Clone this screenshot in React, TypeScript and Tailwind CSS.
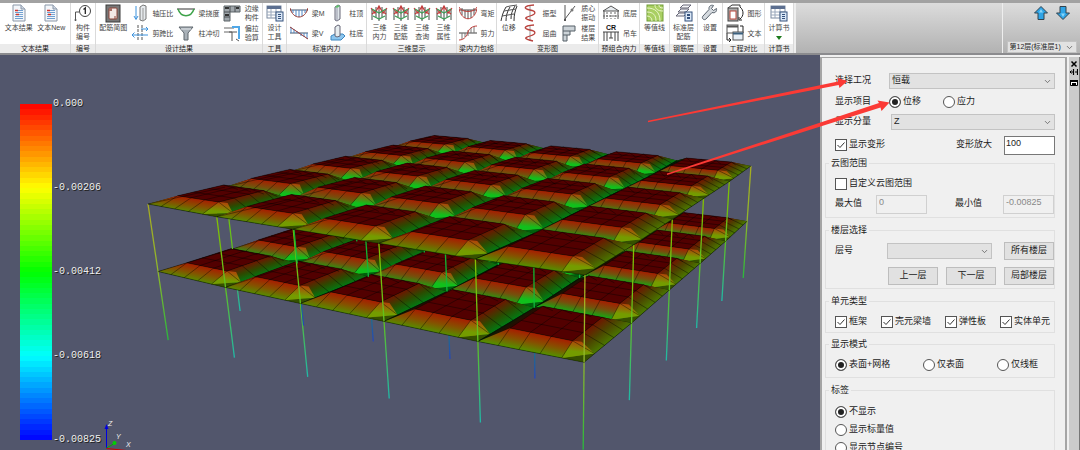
import React from 'react';
import { ChevronDown } from 'lucide-react';

type Point = [number, number];

const Svg: React.FC<{ w?: number; h?: number; children: React.ReactNode }> = ({ w = 18, h = 18, children }) => (
    <svg width={w} height={h} viewBox={`0 0 ${w} ${h}`} fill="none" aria-hidden="true">
        {children}
    </svg>
);

const DocIcon = () => (
    <Svg w={14} h={18}>
        <path d="M1 1h8l4 4v12H1z" fill="#f3f6fa" stroke="#8a97a8" />
        <path d="M9 1v4h4" fill="#cfd8e4" stroke="#8a97a8" />
        <path d="M6 6.500h5M3 8.500h8M3 12.500h8M3 14.500h8" stroke="#6f9fd0" />
        <path d="M3 6.500h3M3 10.500h8" stroke="#7fa9d6" />
        <path d="M3 6.500h3M4 10.500h3" stroke="#d0342c" strokeWidth="1.500" />
    </Svg>
);

const NumberIcon = () => (
    <Svg>
        <circle cx="11" cy="7" r="5.500" stroke="#444" />
        <path d="M9.500 5.500 11.300 4v6" stroke="#222" strokeWidth="1.300" />
        <path d="M1.500 17V8H5" stroke="#555" />
        <circle cx="1.500" cy="16" r="1" fill="#555" />
    </Svg>
);

const RebarIcon = () => (
    <Svg w={16} h={19}>
        <rect x="1" y="1" width="14" height="17" fill="#777" stroke="#3a3a3a" />
        <rect x="4" y="4" width="8" height="11" rx="1" fill="#f4e9e6" stroke="#8d4438" />
        <path d="M6 4v3M4 6h3M10 15v-3" stroke="#8d4438" />
    </Svg>
);

const AxialIcon = () => (
    <Svg>
        <path d="M9 3l3-2 3 1v13l-3 2-3-1z" fill="#e6eaed" stroke="#777" />
        <path d="M12 4v13" stroke="#999" />
        <path d="M5 2v13M3 12l2 3.500L7 12" stroke="#3b92dd" />
    </Svg>
);

const ShearSpanIcon = () => (
    <Svg>
        <path d="M7 1v16M11 1v16" stroke="#555" strokeDasharray="3 1" />
        <path d="M1 11h16M3.500 8.500 1 11l2.500 2.500M10 5h7M15 3l2 2-2 2" stroke="#3b92dd" />
    </Svg>
);

const DeflectionIcon = () => (
    <Svg>
        <path d="M0 5h18" stroke="#333" />
        <path d="M1 5c3 9 13 9 16 0" stroke="#3ea34a" strokeWidth="1.500" />
    </Svg>
);

const PunchIcon = () => (
    <Svg>
        <path d="M2 3h14l-5 6v7H7V9z" fill="#a9b1b8" stroke="#5e666d" />
        <path d="M4 5h10" stroke="#e2e6ea" />
    </Svg>
);

const EdgeIcon = () => (
    <Svg>
        <path d="M1 2h16v6H7v9H1z" fill="#9fa6ab" stroke="#5b6267" />
        <path d="M7 2v6M12 2v6M1 8h6M1 13h6" stroke="#4a4f53" />
        <path d="M2 4h4M2 11h4M13 4h3" stroke="#333" strokeWidth="2" />
    </Svg>
);

const TensionIcon = () => (
    <Svg>
        <path d="M1 4h10M1 8h8" stroke="#666" />
        <path d="M9 3h7v12" stroke="#50a8e8" strokeWidth="2" />
        <path d="M9 8v9M6 8h8M13 15l3 2" stroke="#555" />
    </Svg>
);

const SheetIcon = () => (
    <Svg>
        <rect x="1" y="2" width="14" height="12" fill="#fff" stroke="#7b8aa0" />
        <path d="M1 3.500h14" stroke="#5c6f90" strokeWidth="3" />
        <path d="M1 8h14M1 11h14M5 5v9M10 5v9" stroke="#9aa8bb" />
        <rect x="10" y="8" width="7" height="9" fill="#dbe8f7" stroke="#35527d" />
        <path d="M12 10.500h3M12 12.500h3M12 14.500h3" stroke="#35527d" />
    </Svg>
);

const MomentIcon = () => (
    <Svg>
        <path d="M0 6h18" stroke="#44546a" />
        <path d="M3 6v3M6 6v6M9 6v7M12 6v6M15 6v3" stroke="#4b86c6" />
        <path d="M0 4c3 12 15 12 18 0" stroke="#963b36" />
    </Svg>
);

const ShearIcon = () => (
    <Svg>
        <path d="M0 9h18" stroke="#44546a" />
        <path d="M1 3v6M4 5v4M7 7v2M11 9v3M14 9v4M17 9v6" stroke="#4b86c6" />
        <path d="M0 3l18 12" stroke="#963b36" />
    </Svg>
);

const ColumnIcon = () => (
    <Svg>
        <path d="M7 3l3-2 2 1v13l-3 2-2-1z" fill="#dfe6ea" stroke="#667" />
        <path d="M7 3l2 1 3-2-2-1z" fill="#5fc06b" />
        <path d="M9 4v13" stroke="#99a" />
    </Svg>
);

const ColumnBaseIcon = () => (
    <Svg>
        <path d="M3 12l4-2h8l2 2-4 4H3z" fill="#8cc6ef" stroke="#3d86bf" />
        <path d="M7 3l3-2 2 1v10l-3 1-2-1z" fill="#e6ecef" stroke="#667" />
    </Svg>
);

const Frame3dIcon = () => (
    <Svg>
        <path d="M2 16V5M16 16V5M6 13V3M12 13V3M9 17V6" stroke="#3e4a44" />
        <path d="M1 4l4 5 4-7 4 7 4-5M2 10l4-3M16 10l-4-3M9 2v4" stroke="#c03a3a" strokeWidth="1.200" />
        <path d="M2 5l7 4 7-4M3 12l6 3 6-3" stroke="#3c9c56" strokeWidth="1.200" />
    </Svg>
);

const EnvelopeMomentIcon = () => (
    <Svg>
        <path d="M0 6h18" stroke="#444" />
        <path d="M3 4v7M6 6v8M9 6v9M12 6v8M15 4v7" stroke="#555" />
        <path d="M0 3c2 6 16 6 18 0M0 5c3 13 15 13 18 0" stroke="#c0413d" />
    </Svg>
);

const EnvelopeShearIcon = () => (
    <Svg>
        <path d="M0 9h18" stroke="#444" />
        <path d="M3 9v6M6 9v4M9 6v6M12 4v5M15 2v7" stroke="#777" />
        <path d="M0 16c6 0 8-5 9-8s4-6 9-6" stroke="#c0413d" />
    </Svg>
);

const ShiftIcon = () => (
    <Svg>
        <path d="M1 17C2 12 3 8 6 3M6 17c0-5 1-9 4-14M11 15c0-5 1-8 4-13M14 17c0-6 1-10 3-15" stroke="#333" />
        <path d="M6 3l4-1 7-1M4 7l12-2M2 12l12-2" stroke="#555" />
    </Svg>
);

const ModeIcon = () => (
    <Svg>
        <path d="M9 1v16" stroke="#999" />
        <path d="M13 1C1 2 3 5 9 6s7 4 0 6-5 3 3 5" stroke="#b8423d" strokeWidth="1.300" />
    </Svg>
);

const CentroidIcon = () => (
    <Svg>
        <path d="M5 1v16M5 15L15 2" stroke="#555" />
        <circle cx="5" cy="16" r="1" fill="#333" />
        <circle cx="12" cy="6" r="1.500" fill="#777" />
    </Svg>
);

const StoreyIcon = () => (
    <Svg>
        <path d="M3 2h12v5h-5v4H7v6H3z" fill="#ccd3d8" stroke="#555e66" />
        <path d="M3 7h7M3 11h4" stroke="#555e66" />
    </Svg>
);

const GroundIcon = () => (
    <Svg>
        <path d="M1 7l8-5 8 5zM2 7v8M16 7v8" fill="#e7ebee" stroke="#555" />
        <path d="M1 12h16M5 8v7M9 8v7M13 8v7" stroke="#666" strokeDasharray="2 1" />
    </Svg>
);

const CraneIcon = () => (
    <Svg>
        <path d="M2 8v9M5 8v9M13 8v9M16 8v9M1 8h16M9 8v6M7 14h4" stroke="#444" />
        <text x="4" y="6" fontSize="7" fontWeight="bold" fontFamily="Liberation Sans, sans-serif" fill="#111">
            CR
        </text>
    </Svg>
);

const ContourIcon = () => (
    <Svg>
        <rect x="1" y="1" width="16" height="16" fill="#a9cf62" stroke="#719c37" />
        <path d="M1 12c3 0 5 2 5 5M1 8c6 0 9 3 9 9M1 4c8 0 13 4 13 13M9 1c0 4 3 6 8 6M13 1c0 2 1 3 4 3" stroke="#eaf6ca" />
    </Svg>
);

const LayersIcon = () => (
    <Svg>
        <path d="M5 4l3-3h8l-3 3zM3 8l3-3h8l-3 3zM1 12l3-3h8l-3 3z" fill="#f3f5f7" stroke="#667" />
        <rect x="10" y="8" width="7" height="9" fill="#dbe8f7" stroke="#35527d" />
        <path d="M12 11h3M12 14h3" stroke="#35527d" strokeWidth="2" />
    </Svg>
);

const WrenchIcon = () => (
    <Svg>
        <path
            d="M15.500 4.500l-3 2-2-2 2-3c-3-1-5 1-4.500 4L2 12c-2 2 1 5 3 3l6-6.500c3 1 5-1 4.500-4z"
            fill="#d5dadf"
            stroke="#59636d"
        />
    </Svg>
);

const CompareShapeIcon = () => (
    <Svg>
        <path d="M2 4l4-3h8v2" stroke="#333" />
        <rect x="2" y="4" width="10" height="13" fill="#aaa" stroke="#444" />
        <rect x="4" y="7" width="6" height="8" fill="#fff" stroke="#b9473b" />
        <path d="M14 3c4 3 4 9 0 12M13 13v3h3" stroke="#222" />
    </Svg>
);

const CompareTextIcon = () => (
    <Svg>
        <path d="M1 9v7h4M3 14l2 2-2 2M17 9V2h-3" stroke="#222" />
        <rect x="1" y="1" width="11" height="8" fill="#fff" stroke="#555" />
        <path d="M1 2.500h11" stroke="#555" strokeWidth="2" />
        <rect x="7" y="8" width="10" height="8" fill="#e9f1f8" stroke="#555" />
        <path d="M7 9.500h10" stroke="#3c617f" strokeWidth="2" />
    </Svg>
);

type Tool = { icon: React.FC; lines: string[] };
type Column = { big?: boolean; more?: boolean; tools: Tool[] };

const big = (icon: React.FC, ...lines: string[]): Column => ({ big: true, tools: [{ icon, lines }] });
const pair = (a: Tool, b: Tool): Column => ({ tools: [a, b] });

const ribbon: { title: string; width: string; columns: Column[] }[] = [
    { title: '文本结果', width: 'w-[71px]', columns: [big(DocIcon, '文本结果'), big(DocIcon, '文本New')] },
    { title: '编号', width: 'w-[25px]', columns: [big(NumberIcon, '构件', '编号')] },
    {
        title: '设计结果',
        width: 'w-[167px]',
        columns: [
            big(RebarIcon, '配筋简图'),
            pair({ icon: AxialIcon, lines: ['轴压比'] }, { icon: ShearSpanIcon, lines: ['剪跨比'] }),
            pair({ icon: DeflectionIcon, lines: ['梁挠度'] }, { icon: PunchIcon, lines: ['柱冲切'] }),
            pair({ icon: EdgeIcon, lines: ['边缘', '构件'] }, { icon: TensionIcon, lines: ['偏拉', '验算'] }),
        ],
    },
    { title: '工具', width: 'w-[24px]', columns: [big(SheetIcon, '设计', '工具')] },
    {
        title: '标准内力',
        width: 'w-[80px]',
        columns: [
            pair({ icon: MomentIcon, lines: ['梁M'] }, { icon: ShearIcon, lines: ['梁V'] }),
            pair({ icon: ColumnIcon, lines: ['柱顶'] }, { icon: ColumnBaseIcon, lines: ['柱底'] }),
        ],
    },
    {
        title: '三维显示',
        width: 'w-[90px]',
        columns: [
            big(Frame3dIcon, '三维', '内力'),
            big(Frame3dIcon, '三维', '配筋'),
            big(Frame3dIcon, '三维', '查询'),
            big(Frame3dIcon, '三维', '属性'),
        ],
    },
    {
        title: '梁内力包络',
        width: 'w-[40px]',
        columns: [pair({ icon: EnvelopeMomentIcon, lines: ['弯矩'] }, { icon: EnvelopeShearIcon, lines: ['剪力'] })],
    },
    {
        title: '变形图',
        width: 'w-[102px]',
        columns: [
            big(ShiftIcon, '位移'),
            pair({ icon: ModeIcon, lines: ['振型'] }, { icon: ModeIcon, lines: ['屈曲'] }),
            pair({ icon: CentroidIcon, lines: ['质心', '振动'] }, { icon: StoreyIcon, lines: ['楼层', '结果'] }),
        ],
    },
    {
        title: '预组合内力',
        width: 'w-[41px]',
        columns: [pair({ icon: GroundIcon, lines: ['底层'] }, { icon: CraneIcon, lines: ['吊车'] })],
    },
    { title: '等值线', width: 'w-[30px]', columns: [big(ContourIcon, '等值线')] },
    { title: '钢筋层', width: 'w-[28px]', columns: [big(LayersIcon, '标准层', '配筋')] },
    { title: '设置', width: 'w-[25px]', columns: [big(WrenchIcon, '设置')] },
    {
        title: '工程对比',
        width: 'w-[42px]',
        columns: [pair({ icon: CompareShapeIcon, lines: ['图形'] }, { icon: CompareTextIcon, lines: ['文本'] })],
    },
    { title: '计算书', width: 'w-[29px]', columns: [{ ...big(SheetIcon, '计算书'), more: true }] },
];

const ToolButton: React.FC<{ tool: Tool; isBig?: boolean; more?: boolean }> = ({ tool, isBig, more }) => {
    const Icon = tool.icon;
    return (
        <button
            className={
                isBig
                    ? 'flex h-10 flex-col items-center whitespace-nowrap leading-[9px]'
                    : 'flex h-5 items-center gap-[3px] whitespace-nowrap text-left leading-[9px]'
            }
        >
            <span className={isBig ? 'flex h-5 items-center' : 'flex w-[19px] justify-center'}>
                <Icon />
            </span>
            <span>
                {tool.lines.map((line) => (
                    <span key={line} className="block">
                        {line}
                    </span>
                ))}
            </span>
            {more && (
                <svg width="6" height="4" viewBox="0 0 6 4" className="mt-1">
                    <path d="M0 0h6L3 4z" fill="#1c7a1c" />
                </svg>
            )}
        </button>
    );
};

const Ribbon = () => (
    <header className="flex h-[55px] shrink-0 border-t-[3px] border-b-2 border-t-[#a2a2a2] border-b-[#8b8b8e] bg-linear-to-b from-[#dcdcdc] to-[#b2b2b2] text-[7px] text-[#444]">
        <nav className="flex shrink-0 border-r-2 border-[#eee] bg-white">
            {ribbon.map((group) => (
                <section key={group.title} className={`flex shrink-0 flex-col border-r border-[#dadada] ${group.width}`}>
                    <div className="flex h-[41px] items-start justify-evenly">
                        {group.columns.map((column, index) => (
                            <div key={index}>
                                {column.tools.map((tool) => (
                                    <ToolButton
                                        key={tool.lines.join('')}
                                        tool={tool}
                                        isBig={column.big}
                                        more={column.more}
                                    />
                                ))}
                            </div>
                        ))}
                    </div>
                    <h2 className="flex flex-1 items-center justify-center whitespace-nowrap bg-[#ebebeb] leading-[9px] text-[#222]">
                        {group.title}
                    </h2>
                </section>
            ))}
        </nav>
        <div className="ml-auto flex w-[78px] flex-col items-center justify-between border-l border-[#eee] pt-[3px]">
            <div className="flex gap-2 pl-5">
                {['', 'rotate-180'].map((turn) => (
                    <button key={turn} aria-label={turn ? '下一层' : '上一层'}>
                        <svg width="14" height="14" viewBox="0 0 14 14" className={turn}>
                            <path d="M7 .500 13.500 7H10v6.500H4V7H.500z" fill="#2fa4e6" stroke="#33424d" />
                            <path d="M5 6.500h4L7 3z" fill="#8bd5f7" />
                        </svg>
                    </button>
                ))}
            </div>
            <div className="w-[70px]">
                <Select value="第12层(标准层1)" label="楼层" size="h-3 pl-0.5" />
            </div>
        </div>
    </header>
);

const Select: React.FC<{ value: string; label: string; size: string }> = ({ value, label, size }) => (
    <div className="grid items-center">
        <select
            aria-label={label}
            defaultValue={value}
            className={`w-full appearance-none border border-[#c3c3c3] bg-[#e2e2e2] text-[#222] [grid-area:1/1] ${size}`}
        >
            <option>{value}</option>
        </select>
        <ChevronDown
            className="pointer-events-none mr-[3px] justify-self-end text-[#555] [grid-area:1/1]"
            size={9}
            strokeWidth={2}
        />
    </div>
);

const Check: React.FC<{ label: string; checked?: boolean }> = ({ label, checked }) => (
    <label className="flex items-center gap-0.5 whitespace-nowrap">
        <span className="grid">
            <input
                type="checkbox"
                defaultChecked={checked}
                className="peer size-3 appearance-none border border-[#555] bg-white [grid-area:1/1]"
            />
            <svg
                viewBox="0 0 12 12"
                className="pointer-events-none hidden size-3 [grid-area:1/1] peer-checked:block"
                fill="none"
            >
                <path d="M2.500 6 5 8.500 9.500 3.500" stroke="#333" />
            </svg>
        </span>
        {label}
    </label>
);

const Radio: React.FC<{ label: string; name: string; checked?: boolean }> = ({ label, name, checked }) => (
    <label className="flex items-center gap-0.5 whitespace-nowrap">
        <input
            type="radio"
            name={name}
            defaultChecked={checked}
            className="size-3 appearance-none rounded-full border border-[#555] bg-white checked:bg-[#222] checked:shadow-[inset_0_0_0_2px_white]"
        />
        {label}
    </label>
);

const Group: React.FC<{ title: string; className: string; children: React.ReactNode }> = ({
    title,
    className,
    children,
}) => (
    <fieldset className={`min-w-0 border border-[#e0e0e0] pl-[9px] ${className}`}>
        <legend className="-ml-1.5 px-0.5 leading-[10px]">{title}</legend>
        {children}
    </fieldset>
);

const PanelButton: React.FC<{ children: React.ReactNode }> = ({ children }) => (
    <button className="h-[18px] w-[50px] border border-[#bdbdbd] bg-[#e1e1e1]">{children}</button>
);

const SidePanel = () => (
    <aside className="flex w-[260px] shrink-0 bg-[#f0f0f0] pt-0.5 text-[9px] text-[#222]">
        <form className="flex-1 border-t border-r-2 border-l-2 border-[#a5a5a5] pt-[13px] pr-[10px] pl-[3px]">
            <div className="flex h-5 items-center pl-[10px]">
                <span className="w-[54px]">选择工况</span>
                <div className="flex-1">
                    <Select label="选择工况" value="恒载" size="h-4 pl-0.5" />
                </div>
            </div>
            <div className="flex h-[21px] items-center pl-[10px]">
                <span className="w-[54px]">显示项目</span>
                <div className="flex gap-[22px]">
                    <Radio name="item" label="位移" checked />
                    <Radio name="item" label="应力" />
                </div>
            </div>
            <div className="flex h-5 items-center pl-[10px]">
                <span className="w-14">显示分量</span>
                <div className="flex-1">
                    <Select label="显示分量" value="Z" size="h-4 pl-0.5" />
                </div>
            </div>
            <div className="flex h-[26px] items-center pl-[10px]">
                <Check label="显示变形" checked />
                <label className="ml-auto flex items-center gap-3">
                    变形放大
                    <input
                        defaultValue="100"
                        className="h-[19px] w-[51px] border border-[#777] bg-white px-px pb-1 text-[9px]"
                    />
                </label>
            </div>
            <Group title="云图范围" className="pt-1.5 pb-[3px]">
                <div className="flex h-5 items-center">
                    <Check label="自定义云图范围" />
                </div>
                <div className="flex h-5 items-center justify-between">
                    <label className="flex items-center gap-[14px]">
                        最大值
                        <input
                            disabled
                            defaultValue="0"
                            className="h-[19px] w-[51px] border border-[#d0d0d0] px-0.5 pb-1 text-[#888]"
                        />
                    </label>
                    <label className="flex items-center gap-[21px]">
                        最小值
                        <input
                            disabled
                            defaultValue="-0.00825"
                            className="h-[19px] w-[51px] border border-[#d0d0d0] px-0.5 pb-1 text-[#888]"
                        />
                    </label>
                </div>
            </Group>
            <Group title="楼层选择" className="mt-[7px] pt-1.5 pb-[3px]">
                <div className="flex h-5 items-center justify-between">
                    <span className="w-[52px]">层号</span>
                    <div className="mr-3 flex-1">
                        <Select label="层号" value="" size="h-4 pl-0.5" />
                    </div>
                    <PanelButton>所有楼层</PanelButton>
                </div>
                <div className="mt-1.5 flex justify-end gap-2">
                    <PanelButton>上一层</PanelButton>
                    <PanelButton>下一层</PanelButton>
                    <PanelButton>局部楼层</PanelButton>
                </div>
            </Group>
            <Group title="单元类型" className="mt-[7px] pt-1.5">
                <div className="flex h-5 items-center justify-between pr-1">
                    <Check label="框架" checked />
                    <Check label="壳元梁墙" checked />
                    <Check label="弹性板" checked />
                    <Check label="实体单元" checked />
                </div>
            </Group>
            <Group title="显示模式" className="mt-[6px] pt-1.5 pb-0.5">
                <div className="flex h-5 items-center justify-between pr-4">
                    <Radio name="mode" label="表面+网格" checked />
                    <Radio name="mode" label="仅表面" />
                    <Radio name="mode" label="仅线框" />
                </div>
            </Group>
            <Group title="标签" className="mt-[7px] pt-2">
                {['不显示', '显示标量值', '显示节点编号'].map((label, index) => (
                    <div key={label} className="flex h-[18px] items-center">
                        <Radio name="tag" label={label} checked={index === 0} />
                    </div>
                ))}
            </Group>
        </form>
        <div className="flex w-[13px] flex-col items-end gap-1 border-r border-l-2 border-r-[#777] border-l-[#f0f0f0] bg-[#cbcbcb] pt-[3px] pr-px">
            <svg width="8" height="30" viewBox="0 0 8 30" fill="none" stroke="#000">
                <path d="M1.500 1.500l5 5M6.500 1.500l-5 5" strokeWidth="1.500" />
                <path d="M0 12h3M7.500 9v6M3.500 9v6M5 12h2" strokeWidth="1.200" />
                <path d="M1.500 10.500 0 12l1.500 1.500" />
                <path d="M.500 20.500h7v5h-7z" fill="#fff" />
                <path d="M0 21h8M2 24h4" strokeWidth="2" />
            </svg>
        </div>
    </aside>
);

const BANDS = 64;

const ColorScale = () => (
    <div className="absolute top-11 left-5 flex h-[346px]">
        <div className="my-[5px] flex w-8 flex-col">
            {Array.from({ length: BANDS }, (_, i) => (
                <div
                    key={i}
                    className="flex-1"
                    style={{ backgroundColor: `hsl(${((i + 0.5) / BANDS) * 240} 100% 50%)` }}
                />
            ))}
        </div>
        <div className="ml-px flex flex-col justify-between font-['Liberation_Mono',monospace] text-[10px] leading-[10px] text-[#eee] text-shadow-[1px_1px_0_#222]">
            {['0.000', '-0.00206', '-0.00412', '-0.00618', '-0.00825'].map((value) => (
                <span key={value}>{value}</span>
            ))}
        </div>
    </div>
);

// Perspective camera: u runs along the front edge, v goes into depth, z counts storeys downwards.
const BAYS = 5;
const LIFT = 6.4;

const project = (u: number, v: number, z: number, lift = 0): Point => {
    const w = 1 - 0.2531 * u + 0.497 * v + 0.0251 * z;
    const x = 148 + 288.9 * u + 497.2 * v + 14 * z;
    const y = 204 + 1.4 * u + 1.1 * v + 74.3 * z - lift;
    return [x / w, y / w];
};

// Column heads settle by how many sides they carry: corner, edge, interior.
const settlement = (i: number, j: number) => [4.2, 1.5, 0][Number(i % BAYS === 0) + Number(j % BAYS === 0)];

const toPoints = (points: Point[]) => points.map(([x, y]) => `${x.toFixed(1)},${y.toFixed(1)}`).join(' ');

// A face shaded from its inner edge a-b to its outer edge c-d.
const Face: React.FC<{ id: string; points: [Point, Point, Point, Point]; stops: string[] }> = ({
    id,
    points,
    stops,
}) => {
    const [a, b, c] = points;
    const dx = b[0] - a[0];
    const dy = b[1] - a[1];
    const t = ((c[0] - a[0]) * dx + (c[1] - a[1]) * dy) / (dx * dx + dy * dy);
    return (
        <>
            <linearGradient
                id={id}
                gradientUnits="userSpaceOnUse"
                x1={a[0] + t * dx}
                y1={a[1] + t * dy}
                x2={c[0]}
                y2={c[1]}
            >
                {stops.map((color, i) => (
                    <stop key={i} offset={i / (stops.length - 1)} stopColor={color} />
                ))}
            </linearGradient>
            <polygon points={toPoints(points)} fill={`url(#${id})`} />
        </>
    );
};

const Bay: React.FC<{ i: number; j: number; z: number }> = ({ i, j, z }) => {
    const at = (s: number, t: number) => {
        const p = s / 5;
        const q = t / 5;
        const raised = s > 0 && s < 5 && t > 0 && t < 5;
        const sag =
            settlement(i, j) * (1 - p) * (1 - q) +
            settlement(i + 1, j) * p * (1 - q) +
            settlement(i, j + 1) * (1 - p) * q +
            settlement(i + 1, j + 1) * p * q;
        return project((i + p) / BAYS, (j + q) / BAYS, z, raised ? LIFT : -sag);
    };
    const id = `bay-${z}-${i}-${j}`;
    const steps = [1, 2, 3, 4];
    const front = j === 0 ? ['#a81c00', '#865000', '#549000'] : ['#a81c00', '#75500c', '#0fae14'];
    const right = i === BAYS - 1 ? ['#701400', '#4c4400', '#4a7400'] : ['#701400', '#2c4a00', '#007c14'];
    const outer = i === BAYS - 1 || j === 0;
    return (
        <g>
            <polygon points={toPoints([at(0, 0), at(5, 0), at(5, 5), at(0, 5)])} fill="#062606" />
            <Face id={`${id}-l`} points={[at(1, 4), at(1, 1), at(0, 0), at(0, 5)]} stops={['#2c0a00', '#041c04']} />
            <Face id={`${id}-b`} points={[at(1, 4), at(4, 4), at(5, 5), at(0, 5)]} stops={['#380600', '#0a2a04']} />
            <Face id={`${id}-r`} points={[at(4, 1), at(4, 4), at(5, 5), at(5, 0)]} stops={right} />
            <Face id={`${id}-f`} points={[at(1, 1), at(4, 1), at(5, 0), at(0, 0)]} stops={front} />
            <polygon points={toPoints([at(4, 0), at(5, 0), at(5, 1)])} fill={outer ? '#365000' : '#00600c'} />
            <Face
                id={`${id}-c`}
                points={[at(4, 1), [at(4, 1)[0] + 9, at(4, 1)[1] + 1], at(5, 1), at(4, 0)]}
                stops={outer ? ['#b04408', '#749c00'] : ['#b04408', '#10c01c']}
            />
            <polygon points={toPoints([at(1, 1), at(4, 1), at(4, 4), at(1, 4)])} fill="#520000" />
            <g fill="none" stroke="#000" strokeOpacity="0.65" strokeWidth="0.6">
                {steps.map((k) => (
                    <React.Fragment key={k}>
                        <polyline points={toPoints([at(k, 0), at(k, 1), at(k, 4), at(k, 5)])} />
                        <polyline points={toPoints([at(1, k), at(4, k), at(5, k)])} />
                    </React.Fragment>
                ))}
                <polyline points={toPoints([at(0, 0), at(5, 0), at(5, 5)])} />
                <polyline points={toPoints([at(0, 0), at(0, 5)])} />
            </g>
        </g>
    );
};

const Slab: React.FC<{ z: number }> = ({ z }) => (
    <>
        {Array.from({ length: BAYS * BAYS }, (_, n) => {
            const i = n % BAYS;
            const j = BAYS - 1 - Math.floor(n / BAYS);
            return <Bay key={n} i={i} j={j} z={z} />;
        })}
    </>
);

const Columns: React.FC<{ from: number; to: number }> = ({ from, to }) => (
    <>
        {Array.from({ length: (BAYS + 1) * (BAYS + 1) }, (_, n) => {
            const i = n % (BAYS + 1);
            const j = Math.floor(n / (BAYS + 1));
            const edges = Number(i % BAYS === 0) + Number(j % BAYS === 0);
            const a = project(i / BAYS, j / BAYS, from, -settlement(i, j));
            const b = project(i / BAYS, j / BAYS, to, to > 1 ? 0 : -settlement(i, j));
            const tones = [
                ['#12b020', '#10b83c', '#2446b8'],
                ['#84c000', '#5fc020', '#20b8a8'],
                ['#a8ac20', '#8fb82a', '#28b83c'],
            ][edges];
            const id = `col-${from}-${n}`;
            return (
                <g key={n}>
                    <linearGradient id={id} gradientUnits="userSpaceOnUse" x1={a[0]} y1={a[1]} x2={b[0]} y2={b[1]}>
                        <stop offset="0" stopColor={tones[from]} />
                        <stop offset="1" stopColor={tones[from + 1]} />
                    </linearGradient>
                    <line x1={a[0]} y1={a[1]} x2={b[0]} y2={b[1]} stroke={`url(#${id})`} strokeWidth="1.300" />
                </g>
            );
        })}
    </>
);

const Triad = () => (
    <g fontFamily="Liberation Sans, sans-serif" fontSize="7" fontStyle="italic" fill="#eee">
        <path d="M106.500 448V428" stroke="#0000e0" />
        <path d="M104.500 429l2-5 2 5z" fill="#0000e0" />
        <path d="M106.500 448l7-4" stroke="#00b000" />
        <circle cx="114.500" cy="443" r="2" fill="#00d000" />
        <path d="M106.500 448.500l20 2" stroke="#d00000" />
        <text x="108" y="426">
            Z
        </text>
        <text x="116" y="439">
            Y
        </text>
        <text x="126" y="447">
            X
        </text>
    </g>
);

const Model = () => (
    <svg width="820" height="395" viewBox="0 55 820 395">
        <Columns from={1} to={2.07} />
        <Slab z={1} />
        <Columns from={0} to={1} />
        <Slab z={0} />
        <Triad />
    </svg>
);

const Arrows = () => (
    <svg className="pointer-events-none absolute top-0 left-0" width="1080" height="395" viewBox="0 55 1080 395">
        <g fill="#fb3a35">
            <path d="M648 120.800 838 81.500 837.500 78 847.500 81 839.500 88 838.700 85 648 122.200z" />
            <path d="M667 173.500 879 103 877.500 100.500 889.500 102.500 881.500 111 880.500 107.500 667 175z" />
        </g>
    </svg>
);

export default function App() {
    return (
        <div className="flex h-screen flex-col overflow-hidden font-['Liberation_Sans','Noto_Sans_CJK_SC',sans-serif]">
            <Ribbon />
            <main className="relative flex min-h-0 flex-1">
                <div className="relative min-w-0 flex-1 overflow-hidden bg-[#52566c]">
                    <Model />
                    <ColorScale />
                </div>
                <SidePanel />
                <Arrows />
            </main>
        </div>
    );
}
